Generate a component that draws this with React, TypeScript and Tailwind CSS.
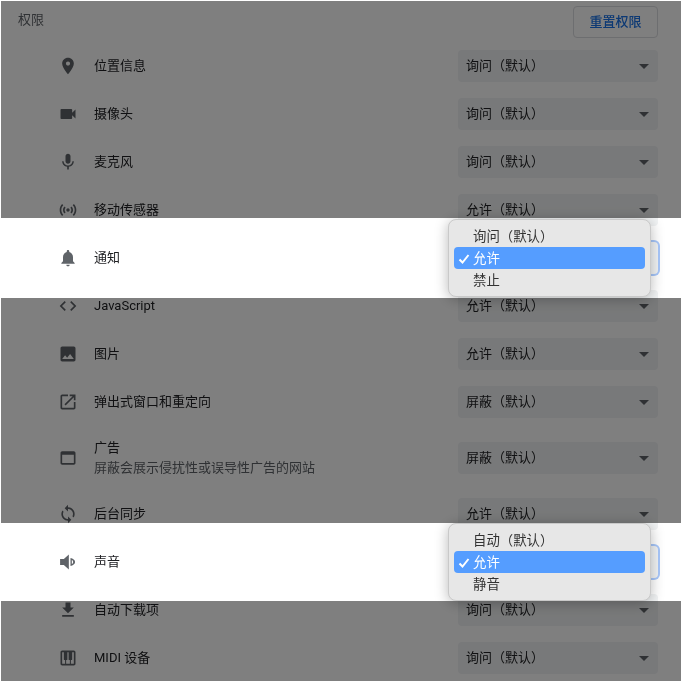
const icons: Record<string, string> = {
  location:
    'M12 2C8.13 2 5 5.13 5 9c0 5.25 7 13 7 13s7-7.75 7-13c0-3.87-3.13-7-7-7zm0 9.5c-1.38 0-2.5-1.12-2.5-2.5s1.12-2.5 2.5-2.5 2.5 1.12 2.5 2.5-1.12 2.5-2.5 2.5z',
  camera:
    'M17 10.5V7c0-.55-.45-1-1-1H4c-.55 0-1 .45-1 1v10c0 .55.45 1 1 1h12c.55 0 1-.45 1-1v-3.5l4 4v-11l-4 4z',
  mic: 'M12 14c1.66 0 2.99-1.34 2.99-3L15 5c0-1.66-1.34-3-3-3S9 3.34 9 5v6c0 1.66 1.34 3 3 3zm5.3-3c0 3-2.54 5.1-5.3 5.1S6.7 14 6.7 11H5c0 3.41 2.72 6.23 6 6.72V21h2v-3.28c3.28-.48 6-3.3 6-6.72h-1.7z',
  sensors:
    'M7.76 16.24C6.67 15.16 6 13.66 6 12s.67-3.16 1.76-4.24l1.42 1.42C8.45 9.9 8 10.9 8 12c0 1.1.45 2.1 1.17 2.83l-1.41 1.41zm8.48 0C17.33 15.16 18 13.66 18 12s-.67-3.16-1.76-4.24l-1.42 1.42C15.55 9.9 16 10.9 16 12c0 1.1-.45 2.1-1.17 2.83l1.41 1.41zM12 10c-1.1 0-2 .9-2 2s.9 2 2 2 2-.9 2-2-.9-2-2-2zm8 2c0 2.21-.9 4.21-2.35 5.65l1.42 1.42C20.88 17.26 22 14.76 22 12s-1.12-5.26-2.93-7.07l-1.42 1.42C19.1 7.79 20 9.79 20 12zM6.35 6.35L4.93 4.93C3.12 6.74 2 9.24 2 12s1.12 5.26 2.93 7.07l1.42-1.42C4.9 16.21 4 14.21 4 12s.9-4.21 2.35-5.65z',
  bell: 'M12 22c1.1 0 2-.9 2-2h-4c0 1.1.89 2 2 2zm6-6v-5c0-3.07-1.64-5.64-4.5-6.32V4c0-.83-.67-1.5-1.5-1.5s-1.5.67-1.5 1.5v.68C7.63 5.36 6 7.92 6 11v5l-2 2v1h16v-1l-2-2z',
  code: 'M9.4 16.6L4.8 12l4.6-4.6L8 6l-6 6 6 6 1.4-1.4zm5.2 0l4.6-4.6-4.6-4.6L16 6l6 6-6 6-1.4-1.4z',
  image:
    'M21 19V5c0-1.1-.9-2-2-2H5c-1.1 0-2 .9-2 2v14c0 1.1.9 2 2 2h14c1.1 0 2-.9 2-2zM8.5 13.5l2.5 3.01L14.5 12l4.5 6H5l3.5-4.5z',
  popup:
    'M19 19H5V5h7V3H5c-1.11 0-2 .9-2 2v14c0 1.1.89 2 2 2h14c1.1 0 2-.9 2-2v-7h-2v7zM14 3v2h3.59l-9.83 9.83 1.41 1.41L19 6.41V10h2V3h-7z',
  ads: 'M19 4H5c-1.11 0-2 .9-2 2v12c0 1.1.89 2 2 2h14c1.1 0 2-.9 2-2V6c0-1.1-.89-2-2-2zm0 14H5V8h14v10z',
  sync: 'M12 4V1L8 5l4 4V6c3.31 0 6 2.69 6 6 0 1.01-.25 1.97-.7 2.8l1.46 1.46C19.54 15.03 20 13.57 20 12c0-4.42-3.58-8-8-8zm0 14c-3.31 0-6-2.69-6-6 0-1.01.25-1.97.7-2.8L5.24 7.74C4.46 8.97 4 10.43 4 12c0 4.42 3.58 8 8 8v3l4-4-4-4v3z',
  sound: 'M2.5 8.5v7h4.5l6 5.5V3L7 8.5H2.5zM15 7.2v9.6c2.9-.6 5.5-2.4 5.5-4.8s-2.6-4.2-5.5-4.8zm1.6 2.4v4.8c1-.5 1.6-1.4 1.6-2.4s-.6-1.9-1.6-2.4z',
  download: 'M19 9h-4V3H9v6H5l7 7 7-7zM5 18v2h14v-2H5z',
  midi: 'M19 3H5c-1.1 0-2 .9-2 2v14c0 1.1.9 2 2 2h14c1.1 0 2-.9 2-2V5c0-1.1-.9-2-2-2zm-5.5 11.5h.75V19h-4.5v-4.5h.75c.41 0 .75-.34.75-.75V5h1.5v8.75c0 .41.34.75.75.75zM5 5h2v8.75c0 .41.34.75.75.75h.75V19H5V5zm14 14h-3.5v-4.5h.75c.41 0 .75-.34.75-.75V5h2v14z',
};

type Row = { icon: string; label: string; sub?: string; value?: string };

// the two rows without a value have their menu open on top of the select
const rows: Row[] = [
  { icon: 'location', label: '位置信息', value: '询问（默认）' },
  { icon: 'camera', label: '摄像头', value: '询问（默认）' },
  { icon: 'mic', label: '麦克风', value: '询问（默认）' },
  { icon: 'sensors', label: '移动传感器', value: '允许（默认）' },
  { icon: 'bell', label: '通知' },
  { icon: 'code', label: 'JavaScript', value: '允许（默认）' },
  { icon: 'image', label: '图片', value: '允许（默认）' },
  { icon: 'popup', label: '弹出式窗口和重定向', value: '屏蔽（默认）' },
  { icon: 'ads', label: '广告', sub: '屏蔽会展示侵扰性或误导性广告的网站', value: '屏蔽（默认）' },
  { icon: 'sync', label: '后台同步', value: '允许（默认）' },
  { icon: 'sound', label: '声音' },
  { icon: 'download', label: '自动下载项', value: '询问（默认）' },
  { icon: 'midi', label: 'MIDI 设备', value: '询问（默认）' },
];

function Icon({ name }: { name: string }) {
  return (
    <svg viewBox="0 0 24 24" className="h-5 w-5 shrink-0 fill-[#5f6368]">
      <path fillRule="evenodd" d={icons[name]} />
    </svg>
  );
}

function SettingRow({ row }: { row: Row }) {
  return (
    <div className={`flex items-center pl-[58px] pr-[24px] ${row.sub ? 'h-16' : 'h-12'}`}>
      <Icon name={row.icon} />
      <div className="ml-4 flex-1">
        <div className="leading-5 text-[#202124]">{row.label}</div>
        {row.sub && <div className="leading-5 text-[#5f6368]">{row.sub}</div>}
      </div>
      <div
        className={`flex h-8 w-[200px] items-center justify-between rounded bg-[#f1f3f4] pl-2 pr-[9px] text-[#202124] ${
          row.value ? '' : 'ring-2 ring-[#a8c7fa]'
        }`}
      >
        <span>{row.value}</span>
        <span className="h-0 w-0 border-x-[5px] border-t-[5px] border-x-transparent border-t-[#5f6368]" />
      </div>
    </div>
  );
}

function PopupMenu({ items, top }: { items: string[]; top: string }) {
  return (
    <div
      className={`absolute left-[448px] flex h-[78px] w-[203px] flex-col rounded-lg border border-[#c9c9c9] bg-[#e7e7e7] px-[5px] py-[5px] text-[13.4px] text-[#333333] shadow-[0_2px_14px_rgba(0,0,0,0.28)] ${top}`}
    >
      {items.map((item, i) => (
        <div
          key={item}
          className={`flex h-[22px] items-center rounded pl-[19px] pt-[2px] ${i === 1 ? 'relative bg-[#559dff] text-white' : ''}`}
        >
          {i === 1 && (
            <svg viewBox="0 0 12 12" className="absolute left-[4px] top-[6px] h-3 w-3 fill-none stroke-white stroke-2">
              <path d="M1.5 6.5 L4.5 9.5 L10.5 2" />
            </svg>
          )}
          {item}
        </div>
      ))}
    </div>
  );
}

export default function App() {
  return (
    <div className="relative h-[682px] w-[682px] overflow-hidden bg-white font-['Roboto','Noto_Sans_CJK_SC',sans-serif] text-[13px] blur-[0.4px]">
      <div className="flex h-[42px] items-start justify-between pl-[18px] pr-[24px] pt-[6px]">
        <div className="mt-1 leading-5 text-[#5f6368]">权限</div>
        <button className="h-8 w-[85px] rounded border border-[#dadce0] bg-white font-medium text-[#1a73e8]">
          重置权限
        </button>
      </div>
      {rows.map((row) => (
        <SettingRow key={row.label} row={row} />
      ))}

      <PopupMenu top="top-[219px]" items={['询问（默认）', '允许', '禁止']} />
      <PopupMenu top="top-[523px]" items={['自动（默认）', '允许', '静音']} />

      {/* dimmed parts of the page, the two open rows stay lit */}
      <div className="absolute left-px right-px top-px h-[217px] bg-black/50" />
      <div className="absolute left-px right-px top-[298px] h-[225px] bg-black/50" />
      <div className="absolute left-px right-px top-[601px] h-[80px] bg-black/50" />
    </div>
  );
}
